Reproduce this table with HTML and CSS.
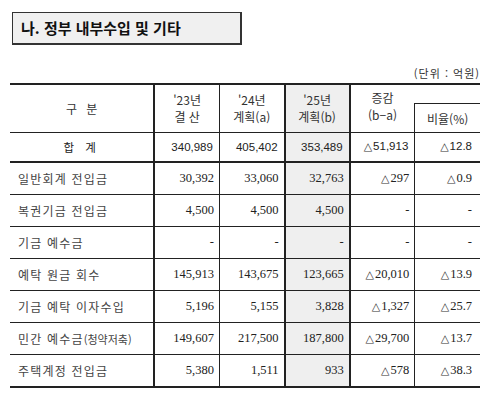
FILE: index.html
```html
<!DOCTYPE html>
<html lang="ko">
<head>
    <meta charset="UTF-8">
    <meta name="viewport" content="width=device-width, initial-scale=1.0">
    <title>나. 정부 내부수입 및 기타</title>
    <link rel="stylesheet" href="styles.css">
</head>
<body>

<!-- Section title -->
<div class="section-title">나. 정부 내부수입 및 기타</div>

<div class="unit">(단위 : 억원)</div>

<!-- Budget table -->
<table class="budget">
    <colgroup>
        <col class="col-label">
        <col class="col-num">
        <col class="col-num">
        <col class="col-num">
        <col class="col-num">
        <col class="col-num">
    </colgroup>
    <thead>
        <tr class="head-top">
            <th rowspan="2" class="first">구 분</th>
            <th rowspan="2" class="thick">'23년<br>결 산</th>
            <th rowspan="2">'24년<br>계획(a)</th>
            <th rowspan="2" class="thick plan">'25년<br>계획(b)</th>
            <th rowspan="2" class="thick diff">증감<br>(b−a)</th>
            <th class="blank"></th>
        </tr>
        <tr class="head-bottom">
            <th class="rate">비율(%)</th>
        </tr>
    </thead>
    <tbody>
        <tr class="total">
            <td class="first">합 계</td>
            <td class="thick">340,989</td>
            <td>405,402</td>
            <td class="thick plan">353,489</td>
            <td class="thick"><span class="tri">△</span>51,913</td>
            <td class="rate"><span class="tri">△</span>12.8</td>
        </tr>
        <tr>
            <td class="first">일반회계 전입금</td>
            <td class="thick">30,392</td>
            <td>33,060</td>
            <td class="thick plan">32,763</td>
            <td class="thick"><span class="tri">△</span>297</td>
            <td class="rate"><span class="tri">△</span>0.9</td>
        </tr>
        <tr>
            <td class="first">복권기금 전입금</td>
            <td class="thick">4,500</td>
            <td>4,500</td>
            <td class="thick plan">4,500</td>
            <td class="thick">-</td>
            <td class="rate">-</td>
        </tr>
        <tr>
            <td class="first">기금 예수금</td>
            <td class="thick">-</td>
            <td>-</td>
            <td class="thick plan">-</td>
            <td class="thick">-</td>
            <td class="rate">-</td>
        </tr>
        <tr>
            <td class="first">예탁 원금 회수</td>
            <td class="thick">145,913</td>
            <td>143,675</td>
            <td class="thick plan">123,665</td>
            <td class="thick"><span class="tri">△</span>20,010</td>
            <td class="rate"><span class="tri">△</span>13.9</td>
        </tr>
        <tr>
            <td class="first">기금 예탁 이자수입</td>
            <td class="thick">5,196</td>
            <td>5,155</td>
            <td class="thick plan">3,828</td>
            <td class="thick"><span class="tri">△</span>1,327</td>
            <td class="rate"><span class="tri">△</span>25.7</td>
        </tr>
        <tr>
            <td class="first">민간 예수금<span class="small">(청약저축)</span></td>
            <td class="thick">149,607</td>
            <td>217,500</td>
            <td class="thick plan">187,800</td>
            <td class="thick"><span class="tri">△</span>29,700</td>
            <td class="rate"><span class="tri">△</span>13.7</td>
        </tr>
        <tr class="last">
            <td class="first">주택계정 전입금</td>
            <td class="thick">5,380</td>
            <td>1,511</td>
            <td class="thick plan">933</td>
            <td class="thick"><span class="tri">△</span>578</td>
            <td class="rate"><span class="tri">△</span>38.3</td>
        </tr>
    </tbody>
</table>

</body>
</html>
```

FILE: styles.css
```css
body {
    margin: 0;
    background-color: #fff;
    font-family: "Noto Sans CJK KR", sans-serif;
    color: #222;
}

.section-title {
    margin: 12px 0 0 12px;
    width: 219px;
    height: 30px;
    line-height: 30px;
    padding-left: 8px;
    background-color: #f0f0f0;
    border: 1px solid #333;
    border-right-width: 2px;
    border-bottom-width: 2px;
    font-size: 15px;
    font-weight: bold;
    color: #111;
}

.unit {
    width: 480px;
    margin-top: 21px;
    text-align: right;
    font-size: 11px;
    letter-spacing: 1px;
    line-height: 14px;
    color: #333;
}

.budget {
    margin: 3px 0 0 10px;
    width: 470px;
    table-layout: fixed;
    border-collapse: collapse;
    border-top: 2px solid #222;
}

.col-label {
    width: 144px;
}

.col-num {
    width: 65px;
}

.budget th,
.budget td {
    padding: 0;
    border-left: 1px solid #222;
    border-bottom: 1px solid #222;
}

.budget th {
    font-weight: normal;
    font-size: 12px;
    line-height: 17px;
    color: #333;
    text-align: center;
}

.budget th.first {
    letter-spacing: 3px;
    text-indent: 3px;
}

.budget .first {
    border-left: none;
}

.budget .thick {
    border-left: 2px solid #222;
}

.budget .plan {
    background-color: #efefef;
}

.head-top {
    height: 19px;
}

.head-bottom {
    height: 29px;
}

.budget th.diff {
    border-right: none;
    padding-bottom: 4px;
}

.budget th.blank {
    border-left: none;
    border-bottom: 1px solid #222;
}

.budget th.rate {
    border-left: 1px solid #222;
    padding-top: 2px;
}

.budget td {
    height: 31px;
    text-align: right;
    padding-right: 5px;
    font-family: "Liberation Serif", "Noto Sans CJK KR", serif;
    font-size: 12.5px;
    color: #222;
}

.budget td.first {
    text-align: left;
    padding-left: 8px;
    font-family: "Noto Sans CJK KR", sans-serif;
    font-size: 12px;
    letter-spacing: 1.2px;
    color: #444;
}

.budget td.rate {
    padding-right: 8px;
}

.tri {
    font-family: "DejaVu Sans", sans-serif;
    font-size: 11px;
    margin-right: 1px;
    color: #333;
}

.small {
    font-size: 11px;
    letter-spacing: 0;
}

.budget .total td {
    height: 28px;
    border-bottom: 2px solid #222;
    font-family: "Liberation Sans", "Noto Sans CJK KR", sans-serif;
    font-size: 11.5px;
    padding-right: 6px;
}

.budget .total td.first {
    text-align: center;
    padding-left: 0;
    padding-right: 0;
    letter-spacing: 4px;
    color: #222;
}

.budget .total td.rate {
    padding-right: 8px;
}

.last td {
    border-bottom: 2px solid #222;
}
```
